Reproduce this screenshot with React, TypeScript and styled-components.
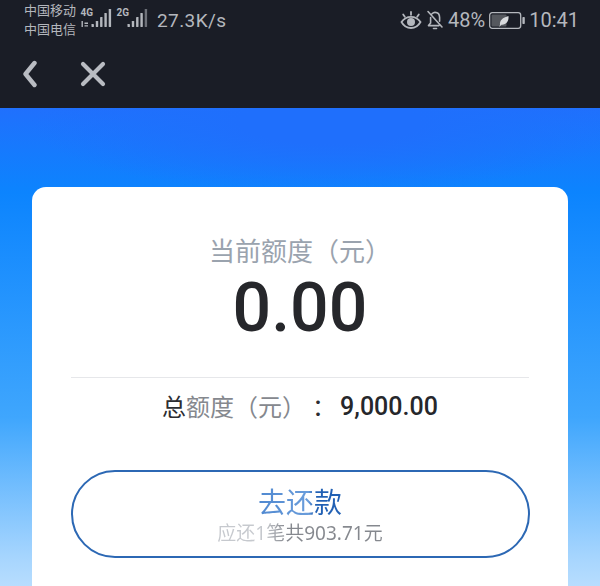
import React from 'react'
import styled, { createGlobalStyle } from 'styled-components'

const GlobalStyle = createGlobalStyle`
  html, body {
    margin: 0;
    padding: 0;
    background: #1a1d26;
  }
`

const CJK = `"Noto Sans", "Noto Sans CJK SC", sans-serif`

const Page = styled.div`
  width: 600px;
  height: 586px;
  overflow: hidden;
  display: flex;
  flex-direction: column;
  font-family: ${CJK};
  text-spacing-trim: space-all;
`

const TopBar = styled.header`
  height: 108px;
  flex: none;
  background: #1a1d26;
  display: flex;
  flex-direction: column;
  color: #b4b7bd;
`

const StatusBar = styled.div`
  height: 40px;
  flex: none;
  padding: 0 21px 0 24px;
  display: flex;
  align-items: center;
  justify-content: space-between;
`

const LeftStatus = styled.div`
  display: flex;
  align-items: center;
`

const RightStatus = styled.div`
  display: flex;
  align-items: center;
  gap: 4px;
`

const Carriers = styled.div`
  display: flex;
  flex-direction: column;
  font-size: 13px;
  line-height: 19px;
  width: 56px;
`

const Speed = styled.span`
  font-size: 19px;
  margin-left: 5px;
  font-family: Roboto, sans-serif;
  letter-spacing: 0.4px;
`

const StatusText = styled.span`
  font-size: 20px;
  font-family: Roboto, sans-serif;
`

const NavBar = styled.nav`
  flex: 1;
  display: flex;
  align-items: center;
  gap: 42px;
  padding-left: 22px;
`

const Hero = styled.main`
  flex: 1;
  background:
    radial-gradient(ellipse 300px 72px at 330px 14px, #1f6ffc 30%, rgba(31, 111, 252, 0) 100%),
    linear-gradient(180deg, #2070fd 0%, #0c84fe 17%, #3fa6fd 62%, #a6d5fe 90%, #c4e3fe 100%);
  padding: 79px 32px 0;
`

const Card = styled.section`
  height: 420px;
  background: #fff;
  border-radius: 14px;
  padding: 0 39px;
  display: flex;
  flex-direction: column;
  align-items: center;
`

const Label = styled.div`
  margin-top: 46px;
  font-size: 26px;
  line-height: 36px;
  color: #9aa3ae;
`

const Amount = styled.div`
  font-family: Roboto, sans-serif;
  font-size: 68px;
  font-weight: 500;
  line-height: 70px;
  color: #26272b;
  margin-top: 4px;
`

const Divider = styled.hr`
  width: 100%;
  height: 1px;
  border: 0;
  margin: 34px 0 0;
  background: #e6e7ea;
`

const Total = styled.div`
  display: flex;
  align-items: center;
  margin-top: 11px;
  font-size: 24px;
  line-height: 36px;
  color: #2c2d31;
`

const TotalDim = styled.span`
  color: #85888e;
`

const TotalColon = styled.span`
  font-family: "Noto Sans CJK TC", sans-serif;
`

const TotalValue = styled.span`
  font-family: Roboto, sans-serif;
  font-size: 25px;
  font-weight: 500;
  color: #26272b;
  margin-left: 10px;
`

const RepayButton = styled.button`
  width: 459px;
  height: 88px;
  flex: none;
  margin-top: 45px;
  border: 2px solid #2c68b4;
  border-radius: 44px;
  background: #fff;
  display: flex;
  flex-direction: column;
  align-items: center;
  justify-content: center;
  font-family: ${CJK};
  padding: 0;
`

const RepayTitle = styled.span`
  font-size: 28px;
  line-height: 38px;
  background: linear-gradient(90deg, #4f88d0 0%, #6a9ddb 60%, #2160b4 67%, #2160b4 100%);
  background-clip: text;
  color: transparent;
`

const RepayNote = styled.span`
  font-size: 19px;
  line-height: 24px;
  background: linear-gradient(90deg, #c6c9ce 0%, #c6c9ce 28%, #85888e 42%, #85888e 100%);
  background-clip: text;
  color: transparent;
`

const Signal: React.FC<{ tag: string; bars: number[]; arrows?: boolean }> = ({ tag, bars, arrows }) => (
  <svg width="36" height="26" viewBox="0 0 36 26" fill="#b4b7bd">
    <text x="0.5" y="9" fontSize="10" fontWeight="700" fontFamily="Roboto, sans-serif">{tag}</text>
    {arrows && <path d="M1.500 14v6h1.400v-6zM4.500 15.500h3.500v1.400H4.500zM4.500 18.200h3.500v1.400H4.500z" />}
    {bars.map((h, i) => (
      <rect key={i} x={11.5 + i * 4.3} y={20 - h} width="2.4" height={h} rx="0.4" opacity={i === 4 && !arrows ? 0.55 : 1} />
    ))}
  </svg>
)

const Eye = () => (
  <svg width="22" height="20" viewBox="0 0 22 20" fill="none" stroke="#b4b7bd" strokeWidth="1.8" strokeLinecap="round">
    <path d="M1.500 12C4 8.200 7 6.800 11 6.800s7 1.400 9.500 5.200C18 16.500 15 18 11 18s-7-1.500-9.500-6z" />
    <circle cx="11" cy="12" r="4" fill="#b4b7bd" stroke="none" />
    <path d="M3.200 4.500l1.600 2.200M11 2v2.800M18.800 4.500l-1.600 2.200" />
  </svg>
)

const BellOff = () => (
  <svg width="18" height="20" viewBox="0 0 18 20" fill="none" stroke="#b4b7bd" strokeWidth="1.6" strokeLinecap="round" strokeLinejoin="round">
    <path d="M2 1.500l14 15.500M4.600 7.500v5.500L2.500 15.600h10.500M6 3.800C7 2.800 8 2.400 9 2.400c3 0 4.600 2.400 4.600 5.200v3.600" />
    <path d="M7.500 18.500h3" />
  </svg>
)

const Battery = () => (
  <svg width="36" height="17" viewBox="0 0 36 17" fill="none">
    <rect x="0.700" y="0.700" width="31" height="15.600" rx="2.500" stroke="#b4b7bd" strokeWidth="1.300" />
    <rect x="2.500" y="2.500" width="15" height="12" rx="1" fill="#55585e" />
    <rect x="33.400" y="5" width="2.400" height="7" rx="0.800" fill="#b4b7bd" />
    <path d="M11 13c-.6-4.500 2.600-7.500 8.500-9 .6 5.500-2.500 9-7 8.700L10 15z" fill="#d8dadd" />
  </svg>
)

const Back = () => (
  <svg width="16" height="28" viewBox="0 0 16 28" fill="none" stroke="#b9bcc2" strokeWidth="4.400" strokeLinecap="round" strokeLinejoin="round">
    <path d="M12.500 3L3.500 14l9 11" />
  </svg>
)

const Close = () => (
  <svg width="26" height="26" viewBox="0 0 26 26" fill="none" stroke="#b9bcc2" strokeWidth="4.200" strokeLinecap="round">
    <path d="M3 3l20 20M23 3L3 23" />
  </svg>
)

export default function App() {
  return (
    <Page>
      <GlobalStyle />
      <TopBar>
        <StatusBar>
          <LeftStatus>
            <Carriers>
              <span>中国移动</span>
              <span>中国电信</span>
            </Carriers>
            <Signal tag="4G" bars={[3, 6, 10, 14, 18]} arrows />
            <Signal tag="2G" bars={[3, 6, 10, 14, 18]} />
            <Speed>27.3K/s</Speed>
          </LeftStatus>
          <RightStatus>
            <Eye />
            <BellOff />
            <StatusText>48%</StatusText>
            <Battery />
            <StatusText>10:41</StatusText>
          </RightStatus>
        </StatusBar>
        <NavBar>
          <Back />
          <Close />
        </NavBar>
      </TopBar>
      <Hero>
        <Card>
          <Label>当前额度（元）</Label>
          <Amount>0.00</Amount>
          <Divider />
          <Total>
            总<TotalDim>额度（元）</TotalDim><TotalColon>：</TotalColon>
            <TotalValue>9,000.00</TotalValue>
          </Total>
          <RepayButton>
            <RepayTitle>去还款</RepayTitle>
            <RepayNote>应还1笔共903.71元</RepayNote>
          </RepayButton>
        </Card>
      </Hero>
    </Page>
  )
}
